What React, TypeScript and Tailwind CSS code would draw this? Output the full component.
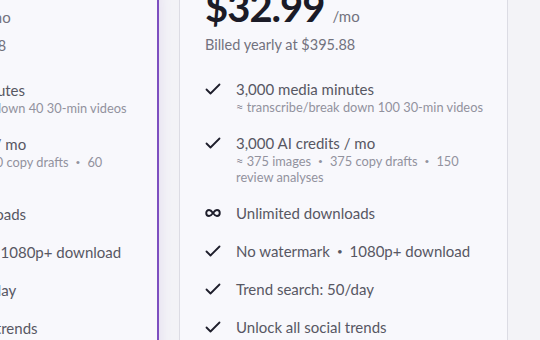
import React from 'react';

type Feature = {
    icon: 'check' | 'infinity';
    title: React.ReactNode;
    sub?: React.ReactNode;
};

const Dot = () => <span className="mx-[7px] text-[0.65em] align-[2px]">•</span>;

const plans: { price: string; billed: string; featured?: boolean; features: Feature[] }[] = [
    {
        price: '$12.99',
        billed: 'Billed yearly at $155.88',
        featured: true,
        features: [
            { icon: 'check', title: '1,200 media minutes', sub: '≈ transcribe/break down 40 30-min videos' },
            {
                icon: 'check',
                title: '1,200 AI credits / mo',
                sub: (
                    <>
                        ≈ 150 images<Dot />150 copy drafts<Dot />60 review analyses
                    </>
                ),
            },
            { icon: 'infinity', title: 'Unlimited downloads' },
            { icon: 'check', title: <>No watermark<Dot />1080p+ download</> },
            { icon: 'check', title: 'Trend search: 2/day' },
            { icon: 'check', title: 'Unlock all social trends' },
        ],
    },
    {
        price: '$32.99',
        billed: 'Billed yearly at $395.88',
        features: [
            { icon: 'check', title: '3,000 media minutes', sub: '≈ transcribe/break down 100 30-min videos' },
            {
                icon: 'check',
                title: '3,000 AI credits / mo',
                sub: (
                    <>
                        ≈ 375 images<Dot />375 copy drafts<Dot />150 review analyses
                    </>
                ),
            },
            { icon: 'infinity', title: 'Unlimited downloads' },
            { icon: 'check', title: <>No watermark<Dot />1080p+ download</> },
            { icon: 'check', title: 'Trend search: 50/day' },
            { icon: 'check', title: 'Unlock all social trends' },
        ],
    },
];

const CheckIcon = () => (
    <svg width="16" height="16" viewBox="0 0 16 16" fill="none">
        <path d="M1.5 8.5 L5.5 12.5 L14.5 3.5" stroke="#1e1e2b" strokeWidth="1.8" strokeLinecap="round" strokeLinejoin="round" />
    </svg>
);

const InfinityIcon = () => (
    <svg width="18" height="16" viewBox="0 0 18 16" fill="none">
        <path
            d="M9 8 C7 5.2 5.8 4.6 4.6 4.6 C2.7 4.6 1.4 6.1 1.4 8 C1.4 9.9 2.7 11.4 4.6 11.4 C5.8 11.4 7 10.8 9 8 C11 5.2 12.2 4.6 13.4 4.6 C15.3 4.6 16.6 6.1 16.6 8 C16.6 9.9 15.3 11.4 13.4 11.4 C12.2 11.4 11 10.8 9 8 Z"
            stroke="#1e1e2b"
            strokeWidth="2.2"
            strokeLinejoin="round"
        />
    </svg>
);

const App = () => {
    return (
        <div
            className="w-[540px] h-[340px] overflow-hidden bg-[#f3f3f7]"
            style={{ fontFamily: 'Lato, "Noto Sans", sans-serif' }}
        >
            <div className="flex gap-[20px] ml-[-170px] mt-[-14px]">
                {plans.map((plan) => (
                    <div
                        key={plan.price}
                        className={
                            plan.featured
                                ? 'w-[329px] shrink-0 rounded-xl bg-[#f8f8fc] border-2 border-[#7d4fc0] shadow-[0_0_14px_rgba(125,79,192,0.14)] pl-[24px] pr-6 pb-8'
                                : 'w-[329px] shrink-0 rounded-xl bg-[#f8f8fc] border border-[#dcdce4] pl-[25px] pr-6 pb-8'
                        }
                    >
                        <div className="flex items-baseline gap-[8px]">
                            <span className="text-[40px] font-bold leading-none tracking-tight text-[#1b1b27]">{plan.price}</span>
                            <span className="text-[15px] text-[#72727e]">/mo</span>
                        </div>
                        <p className="mt-[7px] text-[14.5px] leading-5 text-[#72727e]">{plan.billed}</p>
                        <ul className="mt-[24px] flex flex-col gap-[18px]">
                            {plan.features.map((f, i) => (
                                <li key={i} className="flex gap-[15px]">
                                    <div className="w-4 h-5 flex items-center justify-center shrink-0">
                                        {f.icon === 'check' ? <CheckIcon /> : <InfinityIcon />}
                                    </div>
                                    <div className="flex-1">
                                        <p className="text-[15px] leading-5 text-[#575763]">{f.title}</p>
                                        {f.sub && <p className="text-[12.8px] leading-4 text-[#92929e]">{f.sub}</p>}
                                    </div>
                                </li>
                            ))}
                        </ul>
                    </div>
                ))}
            </div>
        </div>
    );
};

export default App;
